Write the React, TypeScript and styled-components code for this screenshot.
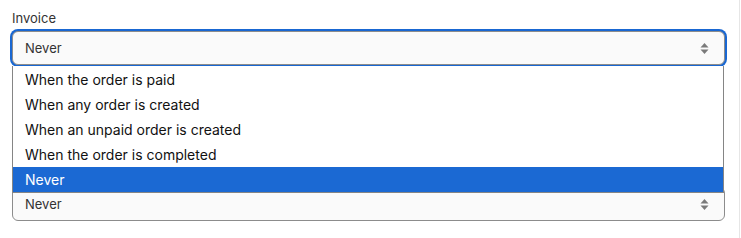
import React from "react";
import styled, { createGlobalStyle } from "styled-components";

const GlobalStyle = createGlobalStyle`
  html, body {
    margin: 0;
    padding: 0;
    background: #fff;
    font-family: Inter, "Noto Sans", sans-serif;
  }
`;

const Page = styled.div`
  width: 740px;
  height: 238px;
  box-sizing: border-box;
  border-right: 1px solid #e6e6e6;
  padding: 10px 14px 0 12px;
`;

const Field = styled.div<{ $gap?: number }>`
  position: relative;
  display: flex;
  flex-direction: column;
  gap: 5px;
  margin-top: ${(p) => p.$gap ?? 0}px;
`;

const Label = styled.label`
  font-size: 13px;
  line-height: 16px;
  color: #333;
`;

const SelectBox = styled.div<{ $focused?: boolean }>`
  height: 34px;
  box-sizing: border-box;
  display: flex;
  align-items: center;
  justify-content: space-between;
  padding: 0 15px 0 12px;
  border: 1px solid #8c8c8c;
  border-radius: 6px;
  background: #fafafa;
  font-size: 13px;
  color: #333;
  box-shadow: ${(p) => (p.$focused ? "0 0 0 2px #1967d2" : "none")};
`;

const Dropdown = styled.ul`
  position: absolute;
  left: 0;
  right: 1px;
  top: 56px;
  margin: 0;
  padding: 0;
  list-style: none;
  background: #fff;
  border: 1px solid #858585;
  border-top: none;
  padding-top: 1px;
  z-index: 2;
`;

const Option = styled.li<{ $selected?: boolean }>`
  height: 25px;
  display: flex;
  align-items: center;
  padding-left: 12px;
  font-size: 14px;
  color: ${(p) => (p.$selected ? "#fff" : "#111")};
  background: ${(p) => (p.$selected ? "#1b69d3" : "transparent")};
`;

const Arrows = () => (
  <svg width="9" height="13" viewBox="0 0 9 13">
    <path d="M4.5 1 L8.5 5.5 L0.5 5.5 Z" fill="#7a7a7a" />
    <path d="M4.5 12 L8.5 7.5 L0.5 7.5 Z" fill="#7a7a7a" />
  </svg>
);

const options = [
  "When the order is paid",
  "When any order is created",
  "When an unpaid order is created",
  "When the order is completed",
  "Never",
];

function App() {
  return (
    <Page>
      <GlobalStyle />
      <Field>
        <Label>Invoice</Label>
        <SelectBox $focused>
          <span>Never</span>
          <Arrows />
        </SelectBox>
        <Dropdown>
          {options.map((o) => (
            <Option key={o} $selected={o === "Never"}>
              {o}
            </Option>
          ))}
        </Dropdown>
      </Field>
      <Field $gap={122}>
        <SelectBox>
          <span>Never</span>
          <Arrows />
        </SelectBox>
      </Field>
    </Page>
  );
}

export default App;
